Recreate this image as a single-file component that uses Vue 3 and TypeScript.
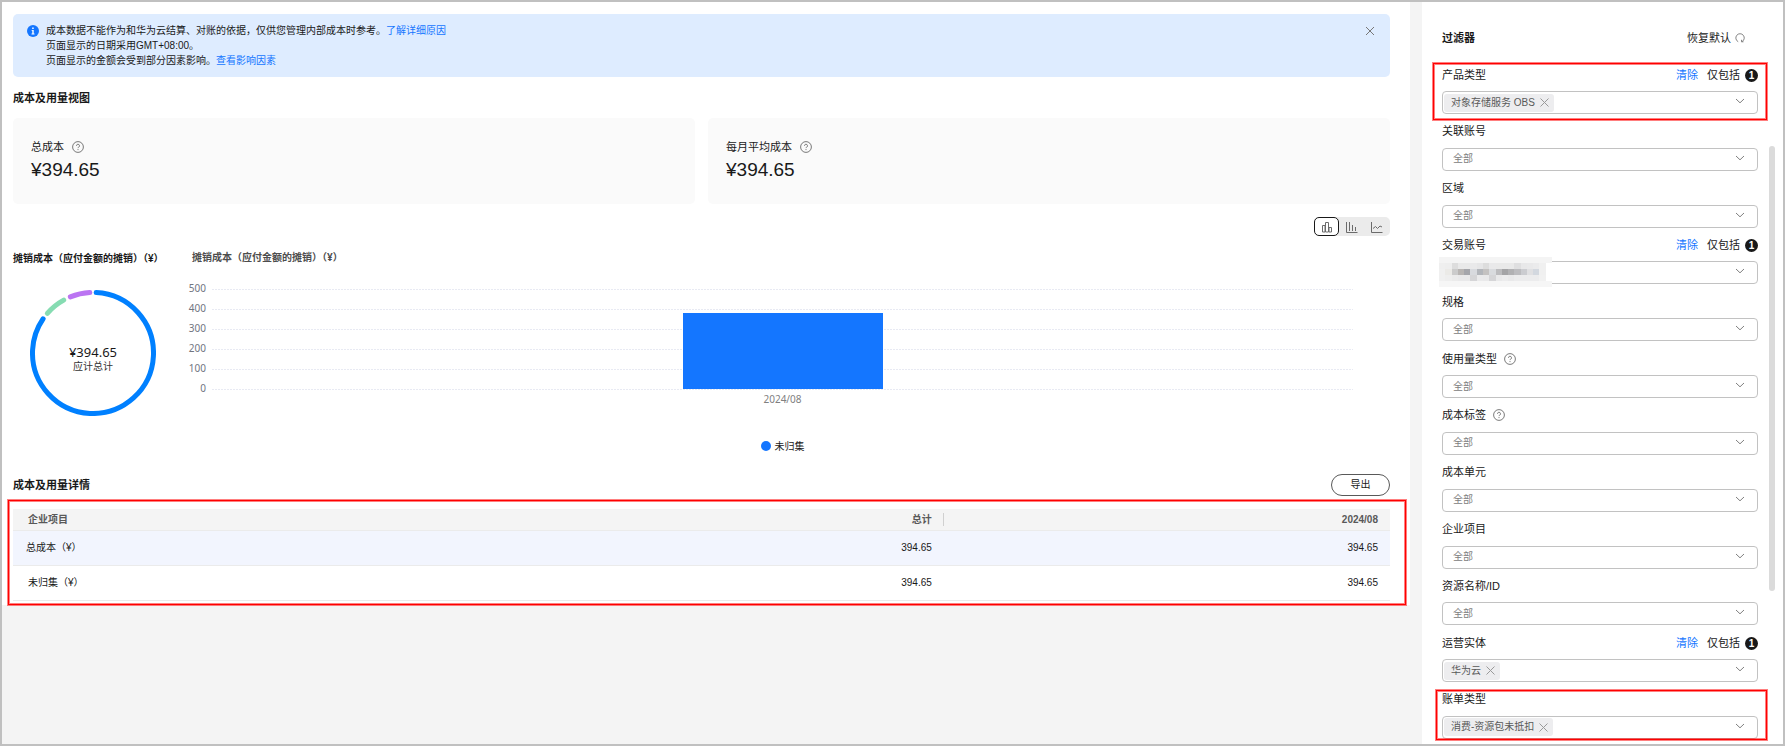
<script setup lang="ts">
import { computed, ref } from 'vue'

interface FilterField {
  id: string
  label: string
  tag?: string
  help?: boolean
  clearable?: boolean
  masked?: boolean
  highlight?: 'first' | 'last'
}

const filters: FilterField[] = [
  { id: 'product', label: '产品类型', tag: '对象存储服务 OBS', clearable: true, highlight: 'first' },
  { id: 'linked', label: '关联账号' },
  { id: 'region', label: '区域' },
  { id: 'trade', label: '交易账号', clearable: true, masked: true },
  { id: 'spec', label: '规格' },
  { id: 'usage', label: '使用量类型', help: true },
  { id: 'costtag', label: '成本标签', help: true },
  { id: 'unit', label: '成本单元' },
  { id: 'project', label: '企业项目' },
  { id: 'resource', label: '资源名称/ID' },
  { id: 'entity', label: '运营实体', tag: '华为云', clearable: true },
  { id: 'bill', label: '账单类型', tag: '消费-资源包未抵扣', highlight: 'last' },
]

const cards = [
  { label: '总成本', value: '¥394.65' },
  { label: '每月平均成本', value: '¥394.65' },
]

const rows = [
  { name: '总成本（¥）', total: '394.65', month: '394.65', sum: true },
  { name: '未归集（¥）', total: '394.65', month: '394.65', sum: false },
]

const ticks = [500, 400, 300, 200, 100, 0]
const barValue = ref(380)
const barHeight = computed(() => `${(barValue.value / 500) * 100}%`)

const chartTypes = [
  { id: 'stack', label: '堆积图' },
  { id: 'bar', label: '柱状图' },
  { id: 'line', label: '折线图' },
]
const chartType = ref('stack')

// Colours of the blocks that hide the account name, row by row.
const mosaicRows: string[][] = [
  Array(18).fill('#f4f4f4'),
  ['#efefef', '#eeeeee', '#dddddd', '#e9e9e9', '#e9e9e9', '#e9e9ea', '#e6e6e7', '#dddddd', '#e9e9ea', '#e9e9e9', '#e9e9e9', '#e9e9e9', '#dfdfe0', '#e8e8e9', '#e9e9ea', '#ebebec', '#f0f0f0'],
  ['#f0f0f0', '#ebeae7', '#cbcbcb', '#b8b5b3', '#a5a6ab', '#d8dade', '#b3b6bb', '#c4c2c1', '#d9dbde', '#bcbcbe', '#a4a4a6', '#b1b1b3', '#bcbcbf', '#cbccd0', '#e0e0e2', '#d3d8df', '#f0f0f0'],
  ['#f0f0f0', '#eeeeee', '#ebebeb', '#e9e9ea', '#e9e9ea', '#d5d5d7', '#eaeaeb', '#e9e9ea', '#d5d5d7', '#e9e9ea', '#ececed', '#e9e9ea', '#ececed', '#ececed', '#ececed', '#ececed', '#f1f1f1'],
  Array(18).fill('#f6f6f6'),
]

const R = 60.5
const C = 2 * Math.PI * R
// Start and end of each donut arc, in degrees clockwise from the top.
const arcs = [
  { from: 3, to: 304, color: '#0080ff' },
  { from: 311, to: 331, color: '#86dcb2' },
  { from: 338, to: 357, color: '#bb74f2' },
].map((a) => ({
  color: a.color,
  dash: `${((a.to - a.from) / 360) * C} ${C}`,
  rotate: `rotate(${a.from - 90} 63 63)`,
}))
</script>

<template>
  <div class="page">
    <main class="main">
      <section class="banner">
        <svg class="info" viewBox="0 0 12 12" aria-hidden="true">
          <circle cx="6" cy="6" r="6" fill="#1476ff" />
          <path d="M5.2 2.6h1.5v1.3H5.2zM4.6 5h2.1v3.6h.8v.9H4.5v-.9h.8V5.8h-.7z" fill="#fff" />
        </svg>
        <div class="banner-text">
          <p>成本数据不能作为和华为云结算、对账的依据，仅供您管理内部成本时参考。<a href="#detail">了解详细原因</a></p>
          <p>页面显示的日期采用GMT+08:00。</p>
          <p>页面显示的金额会受到部分因素影响。<a href="#factors">查看影响因素</a></p>
        </div>
        <button class="icon-btn" type="button" aria-label="关闭">
          <svg width="10" height="10" viewBox="0 0 10 10"><path d="M1 1l8 8M9 1L1 9" stroke="#777" fill="none" /></svg>
        </button>
      </section>

      <h2 class="heading">成本及用量视图</h2>

      <div class="cards">
        <section v-for="c in cards" :key="c.label" class="card">
          <div class="card-label">
            <span>{{ c.label }}</span>
            <svg class="help" viewBox="0 0 12 12" aria-hidden="true">
              <circle cx="6" cy="6" r="5.4" />
              <path d="M4.5 4.8a1.5 1.5 0 1 1 2.2 1.3c-.5.3-.7.5-.7 1M6 8.1v1" />
            </svg>
          </div>
          <div class="card-value">{{ c.value }}</div>
        </section>
      </div>

      <div class="toggle">
        <button
          v-for="t in chartTypes"
          :key="t.id"
          type="button"
          :class="{ active: chartType === t.id }"
          :aria-label="t.label"
          @click="chartType = t.id"
        >
          <svg v-if="t.id === 'stack'" width="12" height="12" viewBox="0 0 12 12">
            <path d="M1.5 4.500h2.500v6.500H1.500zM4.500 1.500h3v9.500h-3zM8 6.500h2.500V11H8z" />
          </svg>
          <svg v-else-if="t.id === 'bar'" width="12" height="12" viewBox="0 0 12 12">
            <path d="M.5 1v10.500h11M3.500 1v9M6.500 4v6M9.500 6v4" />
          </svg>
          <svg v-else width="12" height="12" viewBox="0 0 12 12">
            <path d="M.5 1v10.500h11M2 7.500l2.500-2 2 2L9 5l2 1" />
          </svg>
        </button>
      </div>

      <div class="charts">
        <section class="donut-col">
          <h3>摊销成本（应付金额的摊销）（¥）</h3>
          <div class="donut">
            <svg viewBox="0 0 126 126" aria-hidden="true">
              <circle
                v-for="a in arcs"
                :key="a.color"
                cx="63"
                cy="63"
                :r="R"
                fill="none"
                :stroke="a.color"
                stroke-width="5"
                stroke-linecap="round"
                :stroke-dasharray="a.dash"
                :transform="a.rotate"
              />
            </svg>
            <div class="donut-text">
              <strong>¥394.65</strong>
              <span>应计总计</span>
            </div>
          </div>
        </section>

        <section class="bar-col">
          <h3>摊销成本（应付金额的摊销）（¥）</h3>
          <div class="plot">
            <div v-for="t in ticks" :key="t" class="tick">
              <span>{{ t }}</span>
              <i></i>
            </div>
            <div class="bar-layer"><div class="bar" :style="{ height: barHeight }"></div></div>
          </div>
          <div class="x-label">2024/08</div>
          <div class="legend"><i></i><span>未归集</span></div>
        </section>
      </div>

      <div class="detail-head">
        <h2 class="heading">成本及用量详情</h2>
        <button class="export" type="button">导出</button>
      </div>

      <div class="table-box">
        <table>
          <thead>
            <tr>
              <th class="name">企业项目</th>
              <th class="sep">总计</th>
              <th>2024/08</th>
            </tr>
          </thead>
          <tbody>
            <tr v-for="r in rows" :key="r.name" :class="{ sum: r.sum }">
              <td class="name">{{ r.name }}</td>
              <td>{{ r.total }}</td>
              <td>{{ r.month }}</td>
            </tr>
          </tbody>
        </table>
      </div>
    </main>

    <aside class="side">
      <header class="side-head">
        <h2 class="heading">过滤器</h2>
        <button class="reset" type="button">
          恢复默认
          <svg width="10" height="10" viewBox="0 0 10 10"><path d="M3.200 8.700a4.200 4.200 0 1 1 3.700 0M6.500 6.800v2h2" stroke="#777" fill="none" stroke-width=".9" /></svg>
        </button>
      </header>

      <div class="fields">
        <div v-for="f in filters" :key="f.id" class="field" :class="f.highlight">
          <div class="field-head">
            <label :for="f.id">{{ f.label }}</label>
            <svg v-if="f.help" class="help" viewBox="0 0 12 12" aria-hidden="true">
              <circle cx="6" cy="6" r="5.400" />
              <path d="M4.500 4.800a1.500 1.500 0 1 1 2.200 1.300c-.5.3-.7.5-.7 1M6 8.100v1" />
            </svg>
            <template v-if="f.clearable">
              <button class="clear" type="button">清除</button>
              <span>仅包括</span>
              <b class="badge">1</b>
            </template>
          </div>
          <div class="box">
            <span v-if="f.tag" class="tag">
              {{ f.tag }}
              <button class="icon-btn" type="button" aria-label="移除">
                <svg width="9" height="9" viewBox="0 0 9 9"><path d="M.5.5l8 8M8.500.5l-8 8" stroke="#999" fill="none" /></svg>
              </button>
            </span>
            <select :id="f.id">
              <option>{{ f.tag || f.masked ? '' : '全部' }}</option>
            </select>
            <svg class="chevron" width="10" height="6" viewBox="0 0 10 6" aria-hidden="true">
              <path d="M1 1l4 3.800L9 1" stroke="#808080" fill="none" />
            </svg>
            <svg v-if="f.masked" class="mosaic" viewBox="0 0 18 5" preserveAspectRatio="none" shape-rendering="crispEdges" aria-hidden="true">
              <rect width="18" height="5" fill="#fff" />
              <template v-for="(row, y) in mosaicRows" :key="y">
                <rect v-for="(c, x) in row" :key="x" :x="x" :y="y" width="1" height="1" :fill="c" />
              </template>
            </svg>
          </div>
        </div>
      </div>
      <div class="scroll-thumb"></div>
    </aside>
  </div>
</template>

<style>
body {
  margin: 0;
}
</style>

<style scoped>
.page {
  box-sizing: border-box;
  min-height: 100vh;
  display: flex;
  border: 2px solid #c0c0c0;
  background: #f4f4f4;
  color: #191919;
  font-family: 'Liberation Sans', 'Noto Sans CJK SC', sans-serif;
  font-size: 10px;
  line-height: 16px;
}
h2, h3, p {
  margin: 0;
}
button {
  font: inherit;
  color: inherit;
  border: 0;
  padding: 0;
  background: none;
  cursor: pointer;
}
a {
  color: #1476ff;
  text-decoration: none;
}
svg {
  display: block;
  flex: none;
}
.icon-btn {
  display: flex;
}
.heading {
  font-size: 11px;
  line-height: 20px;
  font-weight: 700;
}
.help {
  width: 12px;
  height: 12px;
  fill: none;
  stroke: #595959;
  stroke-width: 0.8;
}

.main {
  flex: 1;
  min-width: 0;
  align-self: flex-start;
  margin-right: 12px;
  padding: 12px 20px 0 11px;
  background: #fff;
}
.banner {
  display: flex;
  align-items: flex-start;
  margin-bottom: 11px;
  padding: 9px 15px 9px 14px;
  border-radius: 5px;
  background: #deecff;
}
.info {
  width: 12px;
  height: 12px;
  margin: 2px 7px 0 0;
}
.banner-text {
  flex: 1;
  line-height: 15px;
}
.banner .icon-btn {
  margin-top: 3px;
}

.cards {
  display: grid;
  grid-template-columns: 1fr 1fr;
  gap: 13px;
  margin: 10px 0 13px;
}
.card {
  padding: 21px 18px 22px;
  border-radius: 5px;
  background: #fafafa;
}
.card-label {
  display: flex;
  align-items: center;
  gap: 8px;
  font-size: 11px;
}
.card-value {
  margin-top: 3px;
  font-size: 19px;
  line-height: 24px;
}

.toggle {
  display: grid;
  grid-template-columns: repeat(3, 1fr);
  width: 76px;
  margin-left: auto;
  border-radius: 5px;
  background: #ebebeb;
}
.toggle button {
  box-sizing: border-box;
  height: 19px;
  display: grid;
  place-items: center;
  border-radius: 5px;
}
.toggle .active {
  border: 1px solid #191919;
  background: #fff;
}
.toggle path {
  fill: none;
  stroke: #6b6b6b;
}

.charts {
  display: flex;
  margin-top: 13px;
}
h3 {
  font-size: 10px;
  white-space: nowrap;
}
.donut-col {
  width: 175px;
  padding-top: 2px;
}
.donut {
  position: relative;
  width: 126px;
  height: 126px;
  margin: 23px 0 0 17px;
}
.donut-text {
  position: absolute;
  inset: 0;
  display: flex;
  flex-direction: column;
  align-items: center;
  justify-content: center;
  padding-top: 12px;
  line-height: 14px;
}
.donut-text strong {
  font-family: 'Noto Sans', 'Noto Sans CJK SC', sans-serif;
  font-size: 13px;
  line-height: 16px;
  font-weight: 400;
}
.donut-text span {
  color: #333;
}
.bar-col {
  flex: 1;
  min-width: 0;
  margin-right: 37px;
  font-family: 'Noto Sans', 'Noto Sans CJK SC', sans-serif;
}
.bar-col h3 {
  margin: 0 0 14px 4px;
  color: #4d4d4d;
}
.plot {
  position: relative;
}
.tick {
  display: flex;
  align-items: center;
  gap: 6px;
  height: 20px;
}
.tick span {
  width: 18px;
  padding-bottom: 3px;
  text-align: right;
  color: #71757f;
}
.tick i {
  flex: 1;
  height: 1px;
  background: repeating-linear-gradient(90deg, #e8eaf3 0 2px, #fff 2px 3px);
}
.bar-layer {
  position: absolute;
  inset: 10px 0 10px 24px;
  display: flex;
  align-items: flex-end;
  justify-content: center;
}
.bar {
  width: 100%;
  max-width: 200px;
  background: #1476ff;
}
.x-label {
  margin: -8px 0 31px;
  padding-left: 24px;
  text-align: center;
  color: #808080;
}
.legend {
  display: flex;
  align-items: center;
  justify-content: center;
  gap: 4px;
  padding-left: 24px;
}
.legend i {
  width: 10px;
  height: 10px;
  border-radius: 50%;
  background: #1476ff;
}

.detail-head {
  display: flex;
  align-items: center;
  justify-content: space-between;
  margin-top: 20px;
}
.export {
  box-sizing: border-box;
  width: 59px;
  height: 22px;
  border: 1px solid #595959;
  border-radius: 11px;
}
.table-box {
  margin: 4px -16px 0 -5px;
  padding: 8px 15px 3px 4px;
  border: 1px solid #f00;
  box-shadow: 0 0 0 1px rgba(255, 0, 0, 0.5), inset 0 0 0 1px rgba(255, 0, 0, 0.5);
}
table {
  width: 100%;
  table-layout: fixed;
  border-collapse: separate;
  border-spacing: 0;
}
th, td {
  box-sizing: border-box;
  width: 32.4%;
  height: 35px;
  padding: 0 12px;
  border-bottom: 1px solid #ebebeb;
  text-align: right;
}
th {
  height: 22px;
  background: #f4f4f4;
  color: #595959;
}
.name {
  width: 35.2%;
  padding-left: 15px;
  text-align: left;
}
.sep {
  background: linear-gradient(#d0d0d0, #d0d0d0) right center / 1px 13px no-repeat #f4f4f4;
}
.sum td {
  background: #f2f5fe;
}
.sum .name {
  padding-left: 13px;
}

.side {
  position: relative;
  box-sizing: border-box;
  width: 361px;
  display: flex;
  flex-direction: column;
  padding: 25px 25px 5px 20px;
  background: #fff;
}
.side-head {
  display: flex;
  align-items: center;
  justify-content: space-between;
  height: 22px;
  padding-right: 13px;
  margin-bottom: 18px;
}
.reset {
  display: flex;
  align-items: center;
  gap: 4px;
  font-size: 11px;
}
.fields {
  flex: 1;
  display: flex;
  flex-direction: column;
  justify-content: space-between;
  gap: 8px;
}
.field {
  position: relative;
}
.first::after,
.last::after {
  content: '';
  position: absolute;
  inset: -4px -9px -6px;
  border: 1px solid #f00;
  box-shadow: 0 0 0 1px rgba(255, 0, 0, 0.5), inset 0 0 0 1px rgba(255, 0, 0, 0.5);
  pointer-events: none;
}
.last::after {
  inset: -2px -9px -1px -6px;
}
.field-head {
  display: flex;
  align-items: center;
  height: 15px;
  margin-bottom: 9px;
  font-size: 11px;
}
.field-head .help {
  margin-left: 7px;
}
.clear {
  margin: 0 9px 0 auto;
  color: #1476ff;
}
.badge {
  width: 13px;
  height: 13px;
  margin: 2px 0 0 5px;
  border-radius: 50%;
  background: #191919;
  color: #fff;
  font-size: 10px;
  line-height: 13px;
  text-align: center;
}
.box {
  position: relative;
  box-sizing: border-box;
  display: flex;
  align-items: center;
  height: 23px;
  border: 1px solid #c2c2c2;
  border-radius: 4px;
}
.tag {
  display: flex;
  align-items: center;
  gap: 5px;
  height: 18px;
  margin-left: 1px;
  padding: 0 5px 0 7px;
  border-radius: 3px;
  background: #ededef;
  color: #595959;
}
select {
  flex: 1;
  min-width: 0;
  height: 21px;
  padding: 0 10px;
  border: 0;
  appearance: none;
  background: none;
  color: #808080;
  font: inherit;
}
.chevron {
  position: absolute;
  right: 12px;
  top: 6px;
  pointer-events: none;
}
.mosaic {
  position: absolute;
  left: -4px;
  top: -5px;
  width: 113px;
  height: 30px;
}
.scroll-thumb {
  position: absolute;
  right: 8px;
  top: 19.4%;
  width: 6px;
  height: 60%;
  border-radius: 3px;
  background: #dbdbdb;
}
</style>
